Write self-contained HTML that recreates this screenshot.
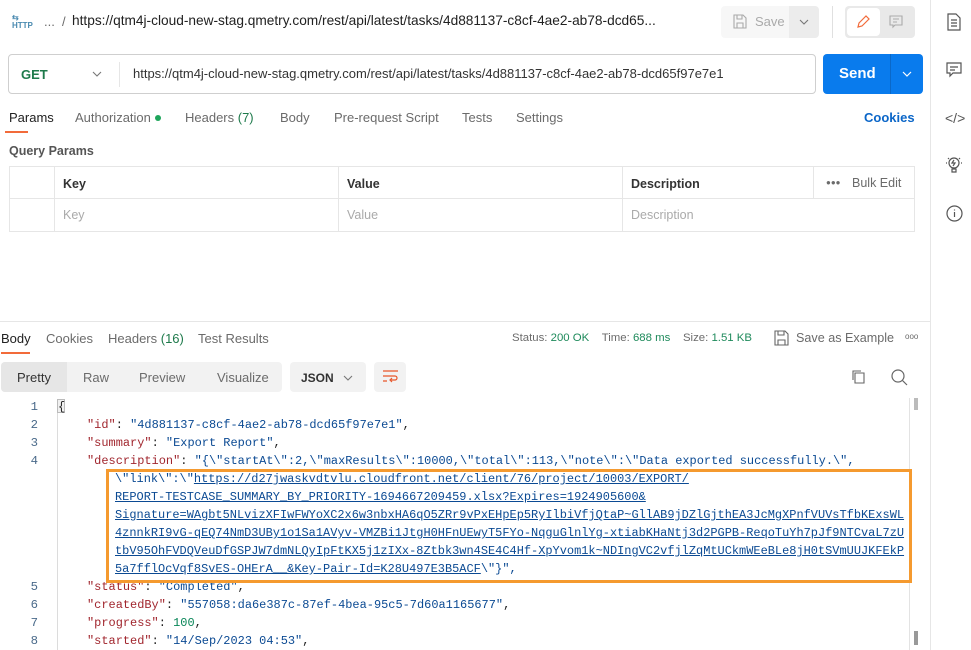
<!DOCTYPE html>
<html><head><meta charset="utf-8"><style>
*{box-sizing:border-box;margin:0;padding:0}
body{width:971px;height:650px;overflow:hidden;background:#fff;font-family:"Liberation Sans",sans-serif;font-size:13px;color:#212121;position:relative}
.a{position:absolute;white-space:nowrap}
.g{color:#6b6b6b}
.code{font-family:"Liberation Mono",monospace;font-size:11.96px;line-height:18px}
.k{color:#a1262e}.s{color:#0b4a93}.n{color:#098658}
.u{color:#0b4a93;text-decoration:underline}
.ln{position:absolute;left:0;width:38px;text-align:right;color:#4a6a8a;font-family:"Liberation Mono",monospace;font-size:12.3px}
</style></head><body>
<div class="a" style="left:930px;top:0;width:1px;height:650px;background:#e6e6e6"></div>
<svg class="a" style="left:946px;top:13px" width="16" height="18" viewBox="0 0 16 18" fill="none" stroke="#555" stroke-width="1.2"><path d="M2 1h8l4 4v12H2z"/><path d="M5 7h6M5 10h6M5 13h6"/></svg>
<svg class="a" style="left:946px;top:62px" width="16" height="16" viewBox="0 0 16 16" fill="none" stroke="#555" stroke-width="1.2"><path d="M1 1h14v10H7l-3 3v-3H1z"/><path d="M4 5h8M4 8h5"/></svg>
<div class="a" style="left:945px;top:110px;color:#555;font-size:14px">&lt;/&gt;</div>
<svg class="a" style="left:945px;top:155px" width="18" height="20" viewBox="0 0 18 20" fill="none" stroke="#555" stroke-width="1.2"><circle cx="9" cy="8" r="5"/><path d="M7 14h4v3H7z"/><path d="M1 8h1M16 8h1M3 3l1 1M15 3l-1 1"/><path d="M9 5l-2 3h3l-2 3" /></svg>
<svg class="a" style="left:946px;top:205px" width="17" height="17" viewBox="0 0 17 17" fill="none" stroke="#555" stroke-width="1.2"><circle cx="8.5" cy="8.5" r="7.5"/><path d="M8.5 7v5M8.5 4.5v1"/></svg>

<div class="a" style="left:12px;top:14px;color:#4a8ab0;font-size:8px;font-weight:bold;line-height:8px">⇆<br>HTTP</div>
<div class="a g" style="left:44px;top:14px;font-size:13px">...&nbsp; /</div>
<div class="a" style="left:72px;top:13px;font-size:13.7px;color:#212121">https://qtm4j-cloud-new-stag.qmetry.com/rest/api/latest/tasks/4d881137-c8cf-4ae2-ab78-dcd65...</div>
<div class="a" style="left:721px;top:6px;width:68px;height:32px;background:#f7f7f7;border-radius:4px 0 0 4px"></div>
<div class="a" style="left:789px;top:6px;width:30px;height:32px;background:#ececec;border-radius:0 4px 4px 0"></div>
<svg class="a" style="left:733px;top:14px" width="14" height="15" viewBox="0 0 14 15" fill="none" stroke="#aaa" stroke-width="1.1"><path d="M1 1h9l3 3v10H1z"/><path d="M4 1v4h5V1M4 14V9h6v5"/></svg>
<div class="a" style="left:755px;top:14px;color:#aaa">Save</div>
<svg class="a" style="left:799px;top:19px" width="10" height="6" viewBox="0 0 10 6" fill="none" stroke="#777" stroke-width="1.1"><path d="M1 1l4 4 4-4"/></svg>
<div class="a" style="left:832px;top:6px;width:1px;height:32px;background:#e0e0e0"></div>
<div class="a" style="left:845px;top:6px;width:70px;height:32px;background:#e9e9e9;border-radius:4px"></div>
<div class="a" style="left:847px;top:8px;width:33px;height:28px;background:#fff;border-radius:4px"></div>
<svg class="a" style="left:856px;top:14px" width="15" height="15" viewBox="0 0 15 15" fill="none" stroke="#f26b3a" stroke-width="1.2"><path d="M2 13l1-4 7-7 3 3-7 7z"/></svg>
<svg class="a" style="left:889px;top:15px" width="14" height="14" viewBox="0 0 14 14" fill="none" stroke="#aaa" stroke-width="1.1"><path d="M1 1h12v9H6l-2 2v-2H1z"/><path d="M4 4h6M4 7h4"/></svg>

<div class="a" style="left:8px;top:54px;width:808px;height:40px;border:1px solid #cfcfcf;border-radius:4px"></div>
<div class="a" style="left:21px;top:67px;color:#1e7a4b;font-weight:bold;font-size:13px">GET</div>
<svg class="a" style="left:92px;top:71px" width="10" height="6" viewBox="0 0 10 6" fill="none" stroke="#777" stroke-width="1.1"><path d="M1 1l4 4 4-4"/></svg>
<div class="a" style="left:119px;top:62px;width:1px;height:25px;background:#e6e6e6"></div>
<div class="a" style="left:133px;top:66px;font-size:13px;color:#333">https://qtm4j-cloud-new-stag.qmetry.com/rest/api/latest/tasks/4d881137-c8cf-4ae2-ab78-dcd65f97e7e1</div>
<div class="a" style="left:823px;top:54px;width:100px;height:40px;background:#097bed;border-radius:4px"></div>
<div class="a" style="left:890px;top:54px;width:1px;height:40px;background:#0a68c8"></div>
<div class="a" style="left:839px;top:65px;color:#fff;font-weight:bold;font-size:15px">Send</div>
<svg class="a" style="left:902px;top:71px" width="10" height="6" viewBox="0 0 10 6" fill="none" stroke="#fff" stroke-width="1.2"><path d="M1 1l4 4 4-4"/></svg>

<div class="a" style="left:9px;top:110px;color:#212121">Params</div>
<div class="a" style="left:5px;top:131px;width:23px;height:2px;background:#f26b3a"></div>
<div class="a g" style="left:75px;top:110px">Authorization</div>
<div class="a" style="left:155px;top:115px;width:6px;height:6px;border-radius:3px;background:#1ea55b"></div>
<div class="a g" style="left:185px;top:110px">Headers <span style="color:#1e7a4b">(7)</span></div>
<div class="a g" style="left:280px;top:110px">Body</div>
<div class="a g" style="left:334px;top:110px">Pre-request Script</div>
<div class="a g" style="left:462px;top:110px">Tests</div>
<div class="a g" style="left:516px;top:110px">Settings</div>
<div class="a" style="left:864px;top:110px;color:#0b66c8;font-weight:bold">Cookies</div>

<div class="a" style="left:9px;top:144px;color:#555;font-size:12.5px;font-weight:bold">Query Params</div>
<div class="a" style="left:9px;top:166px;width:906px;height:66px;border:1px solid #e6e6e6"></div>
<div class="a" style="left:9px;top:198px;width:906px;height:1px;background:#e6e6e6"></div>
<div class="a" style="left:54px;top:166px;width:1px;height:66px;background:#e6e6e6"></div>
<div class="a" style="left:338px;top:166px;width:1px;height:66px;background:#e6e6e6"></div>
<div class="a" style="left:622px;top:166px;width:1px;height:66px;background:#e6e6e6"></div>
<div class="a" style="left:813px;top:166px;width:1px;height:33px;background:#e6e6e6"></div>
<div class="a" style="left:63px;top:177px;color:#333;font-weight:bold;font-size:12.5px">Key</div>
<div class="a" style="left:347px;top:177px;color:#333;font-weight:bold;font-size:12.5px">Value</div>
<div class="a" style="left:631px;top:177px;color:#333;font-weight:bold;font-size:12.5px">Description</div>
<div class="a g" style="left:826px;top:178px;font-size:8px">●●●</div>
<div class="a g" style="left:852px;top:176px;font-size:12.5px">Bulk Edit</div>
<div class="a" style="left:63px;top:208px;color:#aaa;font-size:12.5px">Key</div>
<div class="a" style="left:347px;top:208px;color:#aaa;font-size:12.5px">Value</div>
<div class="a" style="left:631px;top:208px;color:#aaa;font-size:12.5px">Description</div>

<div class="a" style="left:0;top:321px;width:930px;height:1px;background:#e6e6e6"></div>
<div class="a" style="left:1px;top:331px;color:#212121">Body</div>
<div class="a" style="left:1px;top:352px;width:29px;height:2px;background:#f26b3a"></div>
<div class="a g" style="left:46px;top:331px">Cookies</div>
<div class="a g" style="left:108px;top:331px">Headers <span style="color:#1e7a4b">(16)</span></div>
<div class="a g" style="left:198px;top:331px">Test Results</div>
<div class="a g" style="left:512px;top:332px;font-size:11.4px">Status: <span style="color:#1e8a5b">200 OK</span>&nbsp;&nbsp;&nbsp; Time: <span style="color:#1e8a5b">688 ms</span>&nbsp;&nbsp;&nbsp; Size: <span style="color:#1e8a5b">1.51 KB</span></div>
<svg class="a" style="left:774px;top:330px" width="15" height="16" viewBox="0 0 15 16" fill="none" stroke="#666" stroke-width="1.1"><path d="M1 1h10l3 3v11H1z"/><path d="M4 1v4h6V1M4 15V10h7v5"/></svg>
<div class="a g" style="left:796px;top:331px;font-size:12.6px">Save as Example</div>
<div class="a g" style="left:905px;top:332px;font-size:8px">ooo</div>

<div class="a" style="left:1px;top:362px;width:281px;height:30px;background:#f2f2f2;border-radius:4px"></div>
<div class="a" style="left:1px;top:362px;width:66px;height:30px;background:#e6e6e6;border-radius:4px 0 0 4px"></div>
<div class="a" style="left:17px;top:370px;color:#333">Pretty</div>
<div class="a g" style="left:83px;top:370px">Raw</div>
<div class="a g" style="left:139px;top:370px">Preview</div>
<div class="a g" style="left:217px;top:370px">Visualize</div>
<div class="a" style="left:290px;top:362px;width:76px;height:30px;background:#f2f2f2;border-radius:4px"></div>
<div class="a" style="left:301px;top:371px;color:#333;font-weight:bold;font-size:12px">JSON</div>
<svg class="a" style="left:343px;top:375px" width="10" height="6" viewBox="0 0 10 6" fill="none" stroke="#777" stroke-width="1.1"><path d="M1 1l4 4 4-4"/></svg>
<div class="a" style="left:374px;top:362px;width:32px;height:30px;background:#f2f2f2;border-radius:4px"></div>
<svg class="a" style="left:382px;top:369px" width="17" height="15" viewBox="0 0 17 15" fill="none" stroke="#e8562a" stroke-width="1.2"><path d="M1 2h15M1 7h12a2 2 0 010 4H9M1 12h4"/><path d="M10 9l-2 2 2 2"/></svg>
<svg class="a" style="left:851px;top:369px" width="15" height="16" viewBox="0 0 15 16" fill="none" stroke="#666" stroke-width="1.1"><path d="M4 4h9v10H4z"/><path d="M2 11V2h8"/></svg>
<svg class="a" style="left:890px;top:368px" width="18" height="18" viewBox="0 0 18 18" fill="none" stroke="#666" stroke-width="1.2"><circle cx="8" cy="8" r="6"/><path d="M12.5 12.5L17 17"/></svg>

<div class="a" style="left:909px;top:398px;width:1px;height:252px;background:#e3e3e3"></div>
<div class="a" style="left:914px;top:398px;width:4px;height:12px;background:#bbb"></div>
<div class="a" style="left:914px;top:631px;width:4px;height:14px;background:#999"></div>
<div class="a" style="left:57px;top:410px;width:1px;height:240px;background:#dcdcdc"></div>
<div class="a" style="left:57px;top:399px;width:8px;height:14px;border:1px solid #bbb;background:#f0f0f0"></div>
<div class="ln" style="top:398px;line-height:18px">1<br>2<br>3<br>4<br><br><br><br><br><br><br>5<br>6<br>7<br>8</div>
<div class="a code" style="left:58px;top:398px">{</div>
<div class="a code" style="left:87px;top:416px"><span class="k">"id"</span>: <span class="s">"4d881137-c8cf-4ae2-ab78-dcd65f97e7e1"</span>,</div>
<div class="a code" style="left:87px;top:434px"><span class="k">"summary"</span>: <span class="s">"Export Report"</span>,</div>
<div class="a code" style="left:87px;top:452px"><span class="k">"description"</span>: <span class="s">"{\"startAt\":2,\"maxResults\":10000,\"total\":113,\"note\":\"Data exported successfully.\",</span></div>
<div class="a code s" style="left:115px;top:470px">\"link\":\"<span class="u">https://d27jwaskvdtvlu.cloudfront.net/client/76/project/10003/EXPORT/</span><br><span class="u">REPORT-TESTCASE_SUMMARY_BY_PRIORITY-1694667209459.xlsx?Expires=1924905600&amp;</span><br><span class="u">Signature=WAgbt5NLvizXFIwFWYoXC2x6w3nbxHA6qO5ZRr9vPxEHpEp5RyIlbiVfjQtaP~GllAB9jDZlGjthEA3JcMgXPnfVUVsTfbKExsWL</span><br><span class="u">4znnkRI9vG-qEQ74NmD3UBy1o1Sa1AVyv-VMZBi1JtgH0HFnUEwyT5FYo-NqguGlnlYg-xtiabKHaNtj3d2PGPB-ReqoTuYh7pJf9NTCvaL7zU</span><br><span class="u">tbV95OhFVDQVeuDfGSPJW7dmNLQyIpFtKX5j1zIXx-8Ztbk3wn4SE4C4Hf-XpYvom1k~NDIngVC2vfjlZqMtUCkmWEeBLe8jH0tSVmUUJKFEkP</span><br><span class="u">5a7fflOcVqf8SvES-OHErA__&amp;Key-Pair-Id=K28U497E3B5ACF</span>\"}",</div>
<div class="a code" style="left:87px;top:578px"><span class="k">"status"</span>: <span class="s">"Completed"</span>,</div>
<div class="a" style="left:106px;top:469px;width:806px;height:114px;border:3px solid #f59a2f"></div>
<div class="a code" style="left:87px;top:596px"><span class="k">"createdBy"</span>: <span class="s">"557058:da6e387c-87ef-4bea-95c5-7d60a1165677"</span>,</div>
<div class="a code" style="left:87px;top:614px"><span class="k">"progress"</span>: <span class="n">100</span>,</div>
<div class="a code" style="left:87px;top:632px"><span class="k">"started"</span>: <span class="s">"14/Sep/2023 04:53"</span>,</div>
</body></html>
